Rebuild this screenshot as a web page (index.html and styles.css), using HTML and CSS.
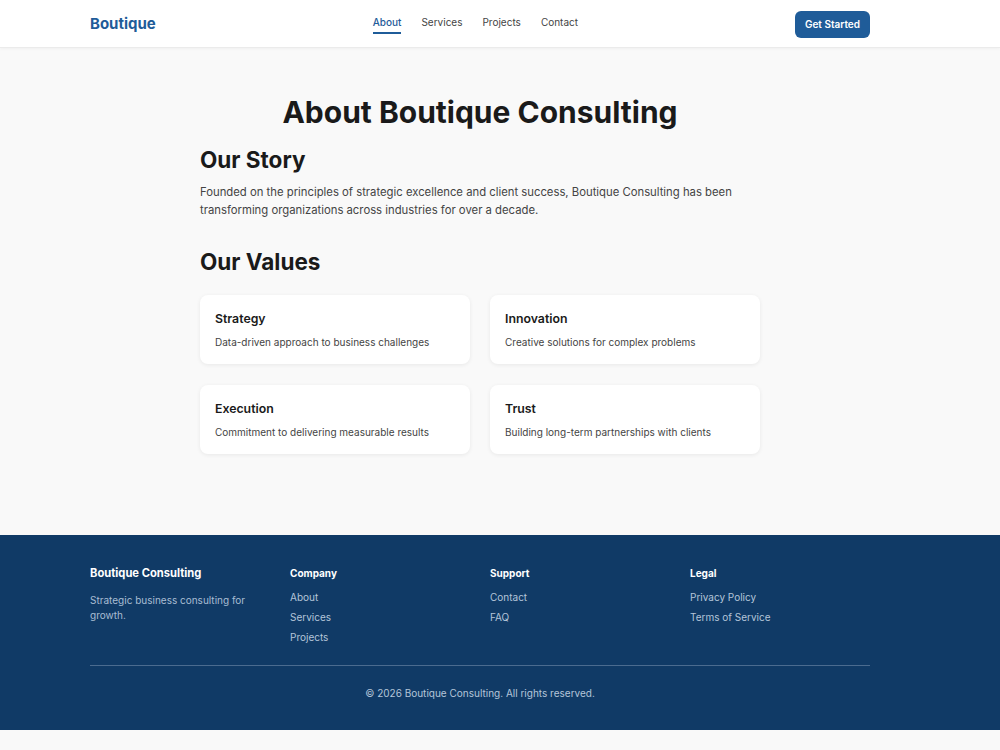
FILE: index.html
```html
<!DOCTYPE html>
<html lang="en">

<head>
    <meta charset="UTF-8">
    <meta name="viewport" content="width=device-width, initial-scale=1.0">
    <title>About - Boutique Consulting</title>
    <link rel="stylesheet" href="styles.css">
</head>

<body>
    <header class="site-header">
        <div class="wrap header-inner">
            <a class="logo" href="#">Boutique</a>
            <nav>
                <ul>
                    <li><a class="active" href="#">About</a></li>
                    <li><a href="#">Services</a></li>
                    <li><a href="#">Projects</a></li>
                    <li><a href="#">Contact</a></li>
                </ul>
            </nav>
            <a class="btn" href="#">Get Started</a>
        </div>
    </header>

    <main class="page">
        <div class="about">
            <h1>About Boutique Consulting</h1>
            <section class="story">
                <h2>Our Story</h2>
                <p>Founded on the principles of strategic excellence and client success, Boutique Consulting has been transforming organizations across industries for over a decade.</p>
            </section>
            <section class="values">
                <h2>Our Values</h2>
                <div class="value-grid">
                    <div class="card">
                        <h3>Strategy</h3>
                        <p>Data-driven approach to business challenges</p>
                    </div>
                    <div class="card">
                        <h3>Innovation</h3>
                        <p>Creative solutions for complex problems</p>
                    </div>
                    <div class="card">
                        <h3>Execution</h3>
                        <p>Commitment to delivering measurable results</p>
                    </div>
                    <div class="card">
                        <h3>Trust</h3>
                        <p>Building long-term partnerships with clients</p>
                    </div>
                </div>
            </section>
        </div>
    </main>

    <footer class="site-footer">
        <div class="wrap">
            <div class="footer-cols">
                <div>
                    <h4 class="brand">Boutique Consulting</h4>
                    <p class="tagline">Strategic business consulting for growth.</p>
                </div>
                <div>
                    <h4>Company</h4>
                    <ul>
                        <li><a href="#">About</a></li>
                        <li><a href="#">Services</a></li>
                        <li><a href="#">Projects</a></li>
                    </ul>
                </div>
                <div>
                    <h4>Support</h4>
                    <ul>
                        <li><a href="#">Contact</a></li>
                        <li><a href="#">FAQ</a></li>
                    </ul>
                </div>
                <div>
                    <h4>Legal</h4>
                    <ul>
                        <li><a href="#">Privacy Policy</a></li>
                        <li><a href="#">Terms of Service</a></li>
                    </ul>
                </div>
            </div>
            <div class="copyright">© 2026 Boutique Consulting. All rights reserved.</div>
        </div>
    </footer>
</body>

</html>
```

FILE: styles.css
```css
body {
    font-family: Inter, 'Noto Sans', sans-serif;
    background-color: #f9f9f9;
    color: #1a1a1a;
    margin: 0;
    padding: 0;
}

a {
    text-decoration: none;
}

.site-header,
.page,
.site-footer {
    padding-right: 40px;
}

.wrap {
    width: 780px;
    margin: 0 auto;
}

/* header */
.site-header {
    background-color: #fff;
    border-bottom: 1px solid #ebebeb;
    box-shadow: 0 1px 3px rgba(0, 0, 0, 0.04);
}

.header-inner {
    height: 47px;
    display: flex;
    align-items: center;
    justify-content: space-between;
}

.logo {
    font-size: 15px;
    font-weight: 700;
    color: #1f5c99;
}

nav ul {
    list-style: none;
    margin: 0 0 3px 0;
    padding: 0;
    display: flex;
    gap: 20px;
}

nav ul li a {
    display: block;
    font-size: 10px;
    color: #444;
    padding: 5px 0 4px;
    border-bottom: 2px solid transparent;
}

nav ul li a.active {
    color: #1f5c99;
    font-weight: 500;
    border-bottom-color: #1f5c99;
}

.btn {
    background-color: #1f5c99;
    color: #fff;
    font-size: 10px;
    font-weight: 600;
    padding: 7px 10px 8px;
    border-radius: 6px;
    margin-top: 1px;
}

/* main */
.about {
    width: 560px;
    margin: 0 auto;
    padding: 46px 0 81px;
}

.about h1 {
    font-size: 30px;
    font-weight: 700;
    line-height: 36px;
    text-align: center;
    margin: 0 0 17px;
}

.about h2 {
    font-size: 22.5px;
    font-weight: 700;
    line-height: 26px;
    margin: 0;
}

.story p {
    font-size: 11.3px;
    line-height: 18px;
    color: #444;
    margin: 10px 0 30px;
}

.value-grid {
    display: grid;
    grid-template-columns: 1fr 1fr;
    gap: 21px 20px;
    margin-top: 20px;
}

.card {
    background-color: #fff;
    border-radius: 8px;
    padding: 16px 15px 15px;
    box-shadow: 0 1px 4px rgba(0, 0, 0, 0.07);
}

.card h3 {
    font-size: 12.3px;
    font-weight: 600;
    line-height: 16px;
    margin: 0 0 8px;
}

.card p {
    font-size: 10px;
    line-height: 14px;
    color: #444;
    margin: 0;
}

/* footer */
.site-footer {
    background-color: #103a66;
    color: #fff;
    padding-top: 30px;
    padding-bottom: 31px;
    margin-bottom: 20px;
}

.footer-cols {
    display: grid;
    grid-template-columns: repeat(4, 1fr);
    gap: 20px;
    padding-bottom: 18px;
    border-bottom: 1px solid #4b6b8f;
}

.site-footer h4 {
    font-size: 10px;
    font-weight: 700;
    line-height: 16px;
    margin: 0 0 6px;
}

.site-footer h4.brand {
    font-size: 11.2px;
    margin-bottom: 12px;
}

.tagline {
    font-size: 10px;
    line-height: 15px;
    color: #a9bdd3;
    margin: 0;
    width: 165px;
}

.site-footer ul {
    list-style: none;
    margin: 0;
    padding: 0;
}

.site-footer ul li a {
    display: block;
    font-size: 10px;
    line-height: 20px;
    color: #b4c5d9;
}

.copyright {
    text-align: center;
    font-size: 10px;
    color: #b4c5d9;
    margin-top: 21px;
}
```
